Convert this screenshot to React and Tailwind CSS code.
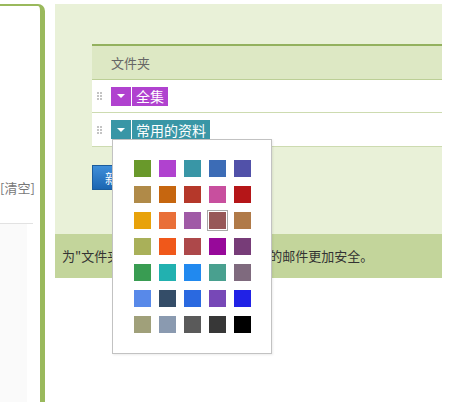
import React from 'react';

const swatches = [
  ['#69992b', '#b042cf', '#3996a6', '#3c6cb6', '#5151a9'],
  ['#b08a48', '#c6660f', '#b5382a', '#c84f9e', '#b51618'],
  ['#e8a20a', '#e96f38', '#a05aa6', '#975858', '#b07a48'],
  ['#a9b059', '#f0581a', '#ad484a', '#97099a', '#773c78'],
  ['#399c52', '#22b1b0', '#2189ef', '#49a08f', '#7f6a7e'],
  ['#5889e9', '#344d68', '#2a69e0', '#7748b7', '#2122e6'],
  ['#a0a07a', '#8a9ab0', '#5a5a5a', '#373737', '#000000'],
];

const font = { fontFamily: '"Noto Sans CJK SC", "Noto Sans", sans-serif' };

function DragHandle() {
  return (
    <div className="grid grid-cols-2 gap-[1px] w-[5px]">
      {Array.from({ length: 6 }).map((_, i) => (
        <span key={i} className="block w-[2px] h-[2px] bg-[#c4c4c4]" />
      ))}
    </div>
  );
}

function FolderTag({ color, label, children }) {
  return (
    <div className="relative flex items-center gap-[1px]">
      <div className="w-[20px] h-[19px] flex items-center justify-center" style={{ backgroundColor: color }}>
        <span className="block w-0 h-0 border-l-[4px] border-r-[4px] border-t-[4px] border-l-transparent border-r-transparent border-t-white" />
      </div>
      <div className="h-[19px] px-[4px] flex items-center text-white text-[14px] leading-none" style={{ backgroundColor: color }}>
        {label}
      </div>
      {children}
    </div>
  );
}

function ColorPicker() {
  return (
    <div className="absolute left-[1px] top-full z-10 w-[160px] bg-white border border-[#c2c2c2] pt-[20px] pl-[21px] pb-[20px] pr-[20px] shadow-[1px_1px_2px_rgba(0,0,0,0.08)]">
      <div className="grid grid-cols-5 gap-x-[8px] gap-y-[9px]">
        {swatches.flat().map((c, i) => (
          <span
            key={i}
            className={
              i === 13
                ? 'block w-[17px] h-[17px] shadow-[0_0_0_1px_#fff,0_0_0_2px_#a8a8a8]'
                : 'block w-[17px] h-[17px]'
            }
            style={{ backgroundColor: c }}
          />
        ))}
      </div>
    </div>
  );
}

export default function App() {
  return (
    <div className="w-[459px] h-[402px] bg-white flex overflow-hidden" style={font}>
      {/* left side panel */}
      <div className="w-[45px] mt-[4px] shrink-0 border-t-2 border-r-[5px] border-[#9ab95c] rounded-tr-[7px] flex flex-col">
        <div className="h-[172px]" />
        <div className="text-right pr-[9px] whitespace-nowrap overflow-hidden text-[13px] leading-[20px] text-[#777]">
          [清空]
        </div>
        <div className="h-[25px]" />
        <div className="h-px bg-[#e2e2e2] mr-[7px]" />
        <div className="flex-1 w-[27px] bg-[#fafafa]" />
      </div>

      {/* folder settings */}
      <div className="ml-[10px] mt-[4px] w-[387px] h-[274px] flex flex-col shrink-0">
        <div className="flex-1 bg-[#e9f1d8] pt-[40px] pl-[37px]">
          <div className="border-t-2 border-[#93b15e] bg-white">
            <div className="h-[34px] bg-[#dde8c4] border-b border-[#bccf96] flex items-center pl-[19px] text-[13px] text-[#666]">
              文件夹
            </div>
            <div className="h-[33px] border-b border-[#cddbb0] flex items-center pl-[5px] gap-[9px]">
              <DragHandle />
              <FolderTag color="#b042cf" label="全集" />
            </div>
            <div className="h-[34px] border-b border-[#cddbb0] flex items-center pl-[5px] gap-[9px]">
              <DragHandle />
              <FolderTag color="#3996a6" label="常用的资料">
                <ColorPicker />
              </FolderTag>
            </div>
          </div>
          <button className="mt-[18px] h-[25px] pl-[12px] pr-[10px] border border-[#1b5c9c] bg-gradient-to-b from-[#3f8fda] to-[#1b66b2] text-white text-[13px] leading-none">
            新建文件夹
          </button>
        </div>
        <div className="h-[44px] bg-[#c3d59b] flex items-center pl-[7px] text-[13px] text-[#333]">
          为"文件夹"设置独立密码，可以让您的邮件更加安全。
        </div>
      </div>
    </div>
  );
}
